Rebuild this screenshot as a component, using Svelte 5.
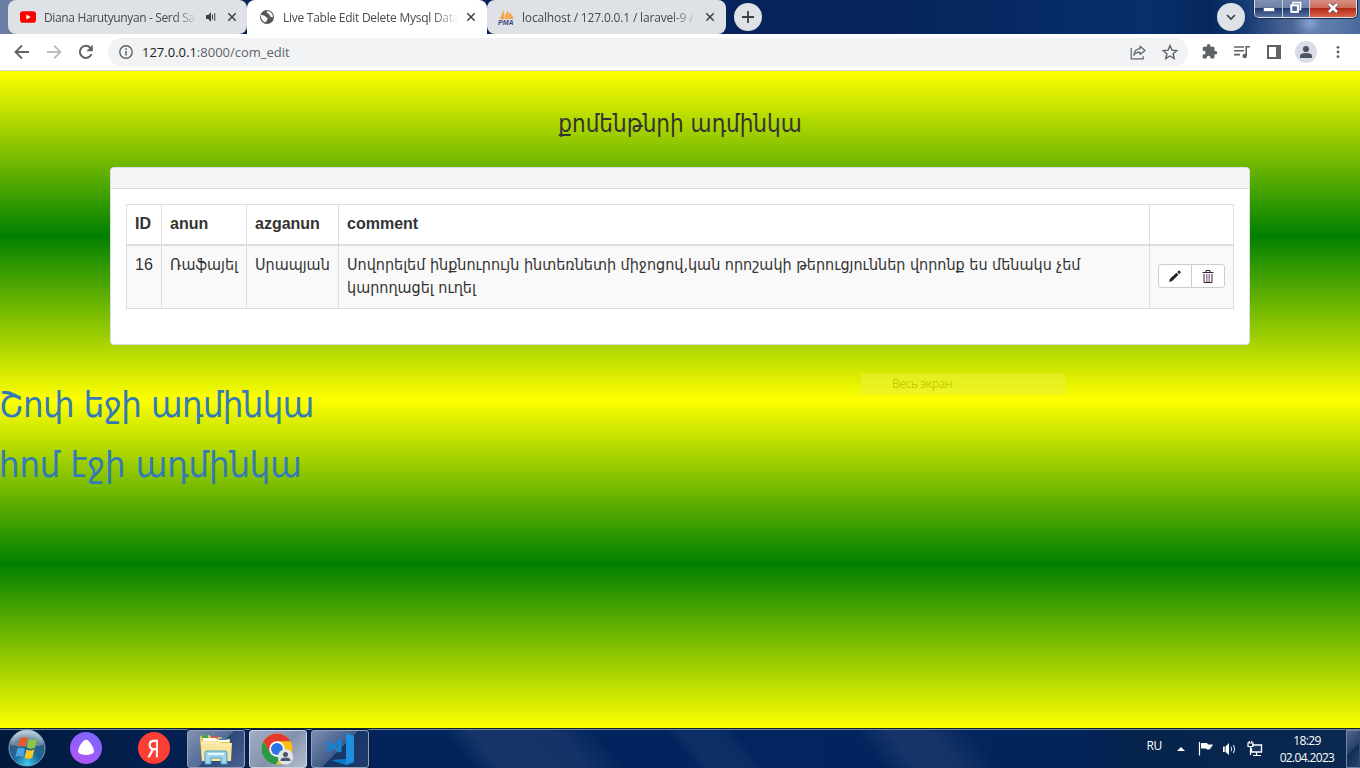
<script>
  const tabs = [
    { id: 'yt', title: 'Diana Harutyunyan - Serd Sa', audio: true },
    { id: 'live', title: 'Live Table Edit Delete Mysql Data', active: true },
    { id: 'pma', title: 'localhost / 127.0.0.1 / laravel-9 / p' }
  ];
  const rows = [
    {
      id: 16,
      anun: 'Ռաֆայել',
      azganun: 'Սրապյան',
      comment: ['Սովորելեմ ինքնուրույն ինտեռնետի միջոցով,կան որոշակի թերուցյուններ վորոնք ես մենակս չեմ', 'կարողացել ուղել']
    }
  ];
</script>

<div class="screen">
  <header class="strip">
    <div class="tabs">
      {#each tabs as tab}
        <div class="tab {tab.id}" class:active={tab.active}>
          {#if tab.id === 'yt'}
            <svg class="fav" width="16" height="16" viewBox="0 0 16 16"><rect y="2.3" width="16" height="11.4" rx="2.8" fill="#f00" /><path d="M6.4 5.5v5L10.7 8z" fill="#fff" /></svg>
          {:else if tab.id === 'live'}
            <svg class="fav" width="16" height="16" viewBox="0 0 16 16"><circle cx="8" cy="8" r="7" fill="#53575b" /><path d="M2 5.500C4 7 5.600 6 6.500 7.500S9 8.200 8.500 10 7 11 7.400 13C4 13.500 1.500 10 2 5.500ZM8 2c-1 1.500.5 1.500 1 2.500s2 .4 1.800 2 1.600 1.200 3 1.700C14.300 5 11.500 2 8 2Z" fill="#fff" /></svg>
          {:else}
            <svg class="fav" width="17" height="16" viewBox="0 0 17 16"><path d="M6 1 1.500 10h5zM10 1c-2 3-3 6-3 9h3zM10.500 3v7h5C15 7 13 4.500 10.500 3Z" fill="#f6a245" /><text x="0" y="15.500" class="pmalogo">PMA</text></svg>
          {/if}
          <span class="title">{tab.title}</span>
          {#if tab.audio}
            <svg class="audio" width="12" height="12" viewBox="0 0 12 12"><path d="M1 4h2.200L6 1.200v9.600L3.200 8H1z" fill="#3c4043" /><path d="M7.500 3.500v5M9.800 2.200v7.600" stroke="#3c4043" stroke-width="1" /></svg>
          {/if}
          <svg class="close" width="10" height="10" viewBox="0 0 10 10"><path d="m1.300 1.300 7.400 7.400m0-7.400L1.300 8.700" stroke="#3c4043" stroke-width="1.500" /></svg>
        </div>
      {/each}
    </div>
    <div class="round plus"><svg width="14" height="14" viewBox="0 0 14 14"><path d="M7 1v12M1 7h12" stroke="#3c4043" stroke-width="1.800" /></svg></div>
    <div class="round search"><svg width="12" height="12" viewBox="0 0 12 12"><path d="m2 4 4 4 4-4" fill="none" stroke="#3c4043" stroke-width="1.700" /></svg></div>
    <div class="winctl">
      <div class="wb min"><svg width="12" height="10"><rect x=".5" y="4.500" width="11" height="4" fill="#fff" stroke="#4a5878" stroke-width=".7" /></svg></div>
      <div class="wb max"><svg width="14" height="13" viewBox="0 0 14 13"><path d="M4 3.500V1.500h7.500v7H9.500" fill="none" stroke="#fff" stroke-width="1.600" /><rect x="2.300" y="4.300" width="6.600" height="6.600" fill="#516489" stroke="#fff" stroke-width="2" /></svg></div>
      <div class="wb x"><svg width="14" height="12" viewBox="0 0 14 12"><path d="m3 2 8 8m0-8-8 8" stroke="#63414a" stroke-width="4" /><path d="m3 2 8 8m0-8-8 8" stroke="#fff" stroke-width="2.600" /></svg></div>
    </div>
  </header>

  <nav class="toolbar">
    <svg class="back" width="16" height="16" viewBox="0 0 16 16"><path d="M15 8H2M8 1.500 1.500 8 8 14.500" fill="none" stroke="#5f6368" stroke-width="1.800" /></svg>
    <svg class="fwd" width="16" height="16" viewBox="0 0 16 16"><path d="M1 8h13M8 1.500 14.500 8 8 14.500" fill="none" stroke="#babcbe" stroke-width="1.800" /></svg>
    <svg class="reload" width="16" height="16" viewBox="0 0 16 16"><path d="M13.500 10A6 6 0 1 1 12.300 3.800L14 5.500" fill="none" stroke="#5f6368" stroke-width="2" /><path d="M14.800.8v6.500H8.300z" fill="#5f6368" /></svg>
    <div class="omni">
      <svg width="14" height="14" viewBox="0 0 14 14"><circle cx="7" cy="7" r="6.200" fill="none" stroke="#5f6368" stroke-width="1.400" /><path d="M7 6v4.500M7 3.300v1.600" stroke="#5f6368" stroke-width="1.500" /></svg>
      <span class="url"><b>127.0.0.1</b>:8000/com_edit</span>
      <svg class="share" width="16" height="16" viewBox="0 0 16 16"><path d="M1.200 4v10.800h12v-2.500" fill="none" stroke="#5f6368" stroke-width="1.200" /><path d="M10 2.200 15 6.500l-5 4V8.200C7 8.200 5.200 9 3.800 11.300 4.200 7.500 6.500 5 10 4.700Z" fill="none" stroke="#5f6368" stroke-width="1.200" stroke-linejoin="round" /></svg>
      <svg class="star" width="16" height="16" viewBox="0 0 16 16"><path d="m8 1.600 1.900 4.500 4.900.4-3.700 3.200 1.100 4.800L8 12l-4.200 2.500 1.100-4.800L1.200 6.500l4.900-.4z" fill="none" stroke="#5f6368" stroke-width="1.400" /></svg>
    </div>
    <div class="acts">
      <svg width="16" height="16" viewBox="1 1 23 23"><path d="M20.500 11H19V7c0-1.100-.9-2-2-2h-4V3.500a2.500 2.500 0 0 0-5 0V5H4c-1.100 0-2 .9-2 2v3.800h1.500a2.700 2.700 0 0 1 0 5.400H2V20c0 1.100.9 2 2 2h3.800v-1.500a2.700 2.700 0 0 1 5.400 0V22H17c1.100 0 2-.9 2-2v-4h1.500a2.500 2.500 0 0 0 0-5z" fill="#5f6368" /></svg>
      <svg width="18" height="16" viewBox="0 0 18 16"><path d="M1 3h10M1 6.800h10M1 10.600h6M13.200 12V2.800H17" fill="none" stroke="#5f6368" stroke-width="1.600" /><circle cx="11.700" cy="12" r="2.200" fill="#5f6368" /></svg>
      <svg width="16" height="16" viewBox="0 0 16 16"><path d="M1 1h14v14H1zM3 3v10h7V3z" fill="#5f6368" fill-rule="evenodd" /></svg>
      <div class="user"><svg width="14" height="14" viewBox="0 0 14 14"><circle cx="7" cy="4" r="3.100" fill="#4c5565" /><path d="M1 13v-2.200C1 8.500 5 7.900 7 7.900s6 .6 6 2.900V13z" fill="#4c5565" /></svg></div>
      <svg width="4" height="16" viewBox="0 0 4 16"><g fill="#5f6368"><circle cx="2" cy="3.300" r="1.400" /><circle cx="2" cy="8" r="1.400" /><circle cx="2" cy="12.700" r="1.400" /></g></svg>
    </div>
  </nav>

  <main>
    <h3>քոմենթնրի ադմինկա</h3>
    <section class="panel">
      <div class="phead"></div>
      <div class="pbody">
        <table>
          <colgroup><col class="c1" /><col class="c2" /><col class="c3" /><col class="c4" /><col class="c5" /></colgroup>
          <thead><tr><th>ID</th><th>anun</th><th>azganun</th><th>comment</th><th></th></tr></thead>
          <tbody>
            {#each rows as row}
              <tr>
                <td>{row.id}</td>
                <td class="hy">{row.anun}</td>
                <td class="hy">{row.azganun}</td>
                <td class="hy">{row.comment[0]}<br />{row.comment[1]}</td>
                <td class="mid">
                  <div class="btns">
                    <button aria-label="edit"><svg width="14" height="14" viewBox="0 0 14 14"><path d="m1 13 1-3.200 6.500-6 2 2-6.300 6.200zM9.200 3.100l1.500-1.300q.5-.4 1 0l.9.900q.4.500 0 1l-1.400 1.400z" fill="#222" /></svg></button>
                    <button aria-label="delete"><svg width="12" height="14" viewBox="0 0 12 14"><path d="M.5 3.500h11M4 3V1.500h4V3M2 5v8.500h8V5" fill="none" stroke="#33232f" stroke-width="1" /><path d="M4.500 5v8M6 5v8M7.500 5v8" fill="none" stroke="#6d4670" stroke-width=".7" /></svg></button>
                  </div>
                </td>
              </tr>
            {/each}
          </tbody>
        </table>
      </div>
    </section>
    <div class="links">
      <a class="l1" href="#shop">Շոփ եջի ադմինկա</a>
      <a class="l2" href="#home">հոմ էջի ադմինկա</a>
    </div>
    <div class="ghost">Весь экран</div>
  </main>

  <footer class="taskbar">
    <div class="app start">
      <svg width="40" height="38" viewBox="0 1 40 38">
        <defs><radialGradient id="orb" cx=".5" cy=".95" r=".9"><stop offset="0" stop-color="#3fd0ee" /><stop offset=".4" stop-color="#17699c" /><stop offset=".75" stop-color="#335a7c" /><stop offset="1" stop-color="#a4bac9" /></radialGradient></defs>
        <circle cx="20" cy="20" r="18" fill="url(#orb)" stroke="#77a2bd" stroke-width="1" />
        <path d="M4 17a16 15.500 0 0 1 32 0q-15 3-32 0Z" fill="#fff" opacity=".28" />
        <path d="M13 10.500q4-3 7.500-.3L18.500 19q-4-2.300-7.800.2z" fill="#e8592b" />
        <path d="M22 11q4 2.300 8-.3l-2 8.800q-4 2.600-8 .2z" fill="#8dc63f" />
        <path d="M10.200 21q4-2.400 7.800 0l-2 8.300q-3.500-2.400-7.700 0z" fill="#4ba4e0" />
        <path d="M19.500 21.500q4 2.300 8-.2l-2.200 8.500q-4 2.300-7.800 0z" fill="#fcc425" />
      </svg>
    </div>
    <div class="app alice">
      <svg width="32" height="32" viewBox="0 0 32 32"><defs><linearGradient id="al" x1=".8" y1="0" x2=".2" y2="1"><stop offset="0" stop-color="#7a66ff" /><stop offset="1" stop-color="#b455f5" /></linearGradient></defs><circle cx="16" cy="16" r="16" fill="url(#al)" /><path d="M16 7.800c3.200 0 8 8 8 11.500 0 4.800-16 4.800-16 0C8 15.800 12.800 7.800 16 7.800Z" fill="#fff" /></svg>
    </div>
    <div class="app ya"><span>Я</span></div>
    <div class="app win w1">
      <svg width="34" height="32" viewBox="0 0 34 32"><path d="M1 7V4l2-2h7l2 2h10l2 2h7v22H3z" fill="#e8c96a" /><path d="M3 2h6v3H3z" fill="#48a64a" /><path d="M12 3.500h7v3h-7z" fill="#e6553c" /><path d="M20 5.500h8v3h-8z" fill="#3886d0" /><path d="M4 5h13l2 2h11v2H4z" fill="#fffbe9" /><path d="M2 8h18l2 2h11l-1 18H3z" fill="#f8e49d" /><path d="M2 10h18v2h12" fill="none" stroke="#fff3bf" /><path d="M6 31V20q0-2 2-2h18q2 0 2 2v11h-6v-6H12v6z" fill="#9dd6ed" stroke="#4e9fc4" /><path d="M9 21h16" stroke="#e9faff" stroke-width="2" /></svg>
    </div>
    <div class="app win w2">
      <svg width="34" height="34" viewBox="0 0 34 34"><circle cx="16" cy="17" r="15.500" fill="#fbc116" /><path d="M2.600 9.200A15.500 15.500 0 0 0 15 32.500L22 21 16 17 9.300 21z" fill="#2a9a48" /><path d="M16 9.200h13.400A15.500 15.500 0 0 0 2.600 9.200l6.700 11.500z" fill="#e33b2e" /><circle cx="16" cy="17" r="7.700" fill="#fff" /><circle cx="16" cy="17" r="6" fill="#2d73e8" /><circle cx="24.500" cy="25" r="7.700" fill="#dfe2e8" /><circle cx="24.500" cy="22.500" r="2.500" fill="#4c5565" /><path d="M19.500 29v-1c0-3.300 10-3.300 10 0v1z" fill="#4c5565" /></svg>
    </div>
    <div class="app win w3">
      <svg width="34" height="34" viewBox="0 0 34 34"><path d="m23 1 8 3v26l-8 3-15-5 15-1z" fill="#0c7bc6" /><path d="m23 1 8 3v26l-8 3z" fill="#1d8fde" /><path d="m3 10 14 9.500M4 19 17 9v11" fill="none" stroke="#1682d0" stroke-width="3.200" /></svg>
    </div>
    <div class="tray">
      <span class="lang">RU</span>
      <svg class="up" width="8" height="4" viewBox="0 0 8 4"><path d="m0 4 4-4 4 4z" fill="#fff" /></svg>
      <svg class="flag" width="16" height="15" viewBox="0 0 16 15"><path d="M1.500 1v13.500" stroke="#fff" stroke-width="1.200" /><path d="M3 2h6l1 1.500h5L13.500 6l-2 2.500H9L8 7.500H3z" fill="#fff" /></svg>
      <svg class="vol" width="15" height="14" viewBox="0 0 15 14"><path d="M1 4.500h1.700V10H1zM3.500 4.500 7 1v12L3.500 10z" fill="#fff" /><path d="M9 4.800q1.400 2.200 0 4.400M11.300 3q2.500 4 0 8" fill="none" stroke="#d9e0ec" stroke-width="1.100" /></svg>
      <svg class="net" width="16" height="16" viewBox="0 0 16 16"><path d="M5 4h9.500v7H4.500V7" fill="#17335f" stroke="#fff" stroke-width="1.300" /><path d="M1 2h5v3.500H1zM2.200 0v2M4.800 0v2M3.500 5.500V14M6 14.500h8M9.500 11v3" fill="none" stroke="#fff" stroke-width="1.200" /></svg>
      <div class="clock"><span class="time">18:29</span><span class="date">02.04.2023</span></div>
      <div class="peek"></div>
    </div>
  </footer>
</div>

<style>
  :global(body) { margin: 0; overflow: hidden; }
  * { box-sizing: border-box; }
  svg { display: block; flex: none; }
  .screen { width: 1360px; height: 768px; display: flex; flex-direction: column; font-family: "Open Sans", sans-serif; overflow: hidden; }
  .strip { height: 34px; flex: none; display: flex; padding-left: 8px; background: radial-gradient(circle 18px at 1310px 23px, #86a0d4 0, #6d87bb88 60%, transparent), linear-gradient(90deg, #6a7ea5 0 8px, #062458 60px, #06245c 740px, #05245c 900px, #082f6b 1145px, #06275f 1210px, #173d76 1248px, #47628f 1285px, #5f7dac 1330px, #4a699c); }
  .tabs { display: flex; }
  .tab { height: 34px; display: flex; align-items: center; border-radius: 8px; background: #dee1e6; position: relative; color: #45494d; }
  .yt { width: 239px; padding-left: 12px; }
  .live { width: 240px; padding-left: 12px; background: #fff; border-radius: 8px 8px 0 0; }
  .pma { width: 239px; padding-left: 11px; }
  .title { font-size: 12px; white-space: nowrap; overflow: hidden; margin-left: 8px; mask-image: linear-gradient(90deg, #000 85%, transparent); }
  .yt .title { width: 153px; letter-spacing: -.36px; }
  .live .title { width: 176px; letter-spacing: -.26px; }
  .pma .title { width: 176px; letter-spacing: -.17px; margin-left: 7px; }
  .audio { margin-left: 8px; }
  .close { position: absolute; right: 10px; top: 12px; }
  .live .close { right: 11px; }
  .pma .close { right: 11px; }
  .pmalogo { font: italic 700 7px "Liberation Sans", sans-serif; fill: #3f4680; }
  .round { width: 28px; height: 28px; margin-top: 3px; border-radius: 50%; background: #dee1e6; display: grid; place-items: center; }
  .plus { margin-left: 8px; }
  .search { margin-left: auto; }
  .winctl { display: flex; width: 103px; height: 18px; margin: 0 3px 0 9px; border: 1px solid #dae2ef; border-top: 0; border-radius: 0 0 5px 5px; overflow: hidden; box-shadow: 0 0 0 1px #1b2b4a; }
  .wb { width: 28px; display: grid; place-items: center; background: linear-gradient(#7e90b4, #6d80a7 48%, #203b6c 50%, #58709f); border-right: 1px solid #c2ccdd; }
  .wb svg { margin-top: -2px; }
  .max { width: 27px; }
  .x { flex: 1; border: 0; background: linear-gradient(#d79082, #cf6b59 48%, #b52a16 50%, #d96547); }

  .toolbar { height: 37px; flex: none; display: flex; align-items: center; background: #fff; border-bottom: 1px solid #d8dbcf; }
  .back { margin-left: 14px; }
  .fwd { margin-left: 16px; }
  .reload { margin-left: 16px; }
  .omni { width: 1080px; height: 28px; margin-left: 14px; border-radius: 14px; background: #f1f3f4; display: flex; align-items: center; padding: 0 10px 0 11px; }
  .url { margin-left: 9px; font: 13px "Open Sans", sans-serif; color: #5f6368; }
  .url b { font-weight: 400; color: #202124; }
  .share { margin-left: auto; }
  .star { margin-left: 16px; }
  .acts { display: grid; grid-template-columns: repeat(5, 32px); align-items: center; justify-items: center; padding-left: 6px; }
  .user { width: 22px; height: 22px; border-radius: 50%; background: #dadde5; display: grid; place-items: center; }

  main { height: 657px; flex: none; position: relative; background: linear-gradient(yellow, green, yellow) 0 0 / 100% 328.5px; color: #333; font-family: "Liberation Sans", "DejaVu Sans Condensed", "DejaVu Sans", sans-serif; overflow: hidden; }
  h3 { margin: 36px 0 0; height: 34px; font: 400 24px/34px "DejaVu Sans Condensed", "DejaVu Sans", sans-serif; text-align: center; }
  .panel { width: 1140px; height: 178px; margin: 26px auto 0; background: #fff; border: 1px solid #ddd; border-radius: 4px; overflow: hidden; }
  .phead { height: 21px; background: #f5f5f5; border-bottom: 1px solid #ddd; }
  .pbody { padding: 15px; }
  table { width: 1108px; table-layout: fixed; border-collapse: collapse; font-size: 16px; line-height: 22.860px; }
  .c1 { width: 35px; } .c2 { width: 85px; } .c3 { width: 92px; } .c4 { width: 811px; } .c5 { width: 84px; }
  th, td { border: 1px solid #ddd; padding: 8px; text-align: left; vertical-align: top; white-space: nowrap; }
  th { border-bottom-width: 2px; height: 40px; }
  td { height: 64px; }
  tbody tr { background: #f9f9f9; }
  td.mid { vertical-align: middle; }
  .hy { font-family: "DejaVu Sans Condensed", "DejaVu Sans", sans-serif; }
  .btns { display: flex; margin-top: -2px; }
  button { width: 34px; height: 24px; padding: 0; border: 1px solid #ccc; background: #fff; display: grid; place-items: center; border-radius: 3px 0 0 3px; }
  button + button { margin-left: -1px; border-radius: 0 3px 3px 0; }
  .links { margin-top: 30px; display: flex; flex-direction: column; align-items: flex-start; }
  a { font: 36px/60px "DejaVu Sans Condensed", "DejaVu Sans", sans-serif; color: #337ab7; text-decoration: none; white-space: nowrap; }
  .l1 { letter-spacing: -.55px; margin-left: -1px; }
  .l2 { letter-spacing: -.1px; margin-left: -1px; }
  .ghost { position: absolute; left: 861px; top: 303px; width: 204px; height: 20px; padding-left: 31px; background: #e9f03d8c; box-shadow: 0 0 3px #e9f03d66; font: 12px/20px "Open Sans", sans-serif; letter-spacing: -.4px; color: #c6cb00; }

  .taskbar { height: 40px; flex: none; display: flex; background: linear-gradient(50deg, transparent 34%, #ffffff14 36%, #ffffff12 42%, transparent 45%, transparent 50%, #ffffff0c 51%, #ffffff0a 54%, transparent 55%, transparent 63.500%, #ffffff14 66%, #ffffff12 69%, transparent 72%), linear-gradient(90deg, #031a3e, #032050 160px, #02245c 400px, #02245f 800px, #03245a 1080px, #06234b 1140px, #0a2950); border-top: 1px solid #16232e; box-shadow: inset 0 1px #6e8494; }
  .app { height: 38px; display: grid; place-items: center; flex: none; }
  .start { width: 40px; margin-left: 7px; }
  .alice { width: 32px; margin-left: 23px; }
  .ya { margin-left: 36px; width: 32px; height: 32px; margin-top: 3px; border-radius: 50%; background: #fc3f35; color: #fff; font: 24px/32px "Open Sans", sans-serif; }
  .ya span { transform: scaleX(.8); -webkit-text-stroke: .6px #fff; }
  .win { width: 58px; height: 38px; margin-top: 1px; border: 1px solid #93a3bc; border-radius: 3px; margin-left: 4px; background: linear-gradient(135deg, #8292b0, #536b94 49%, #2c477a 51%, #496490); box-shadow: 0 0 0 1px #091c3c; }
  .w1 { margin-left: 17px; }
  .w2 { background: linear-gradient(135deg, #a1adc4, #8794b0 49%, #8390ab 51%, #b4bdce); border-color: #ccd3df; }
  .w3 { background: linear-gradient(135deg, #7c8dae, #415c8a 49%, #173667 51%, #1e3b6c); }
  .tray { margin-left: auto; display: flex; align-items: center; color: #fff; font-size: 12px; }
  .lang { margin-bottom: 6px; font-size: 12px; letter-spacing: -.3px; }
  .up { margin-left: 15px; margin-top: 1px; }
  .flag { margin-left: 13px; }
  .vol { margin-left: 8px; }
  .net { margin-left: 10px; }
  .clock { margin-left: 16px; width: 56px; display: flex; flex-direction: column; align-items: center; line-height: 17px; letter-spacing: -.65px; white-space: nowrap; }
  .peek { width: 14px; height: 38px; margin-left: 11px; border: 1px solid #71839e; border-right-color: #354c6f; background: linear-gradient(135deg, #53678a, #263f67 50%, #102b55 52%, #2b466e); }
</style>
